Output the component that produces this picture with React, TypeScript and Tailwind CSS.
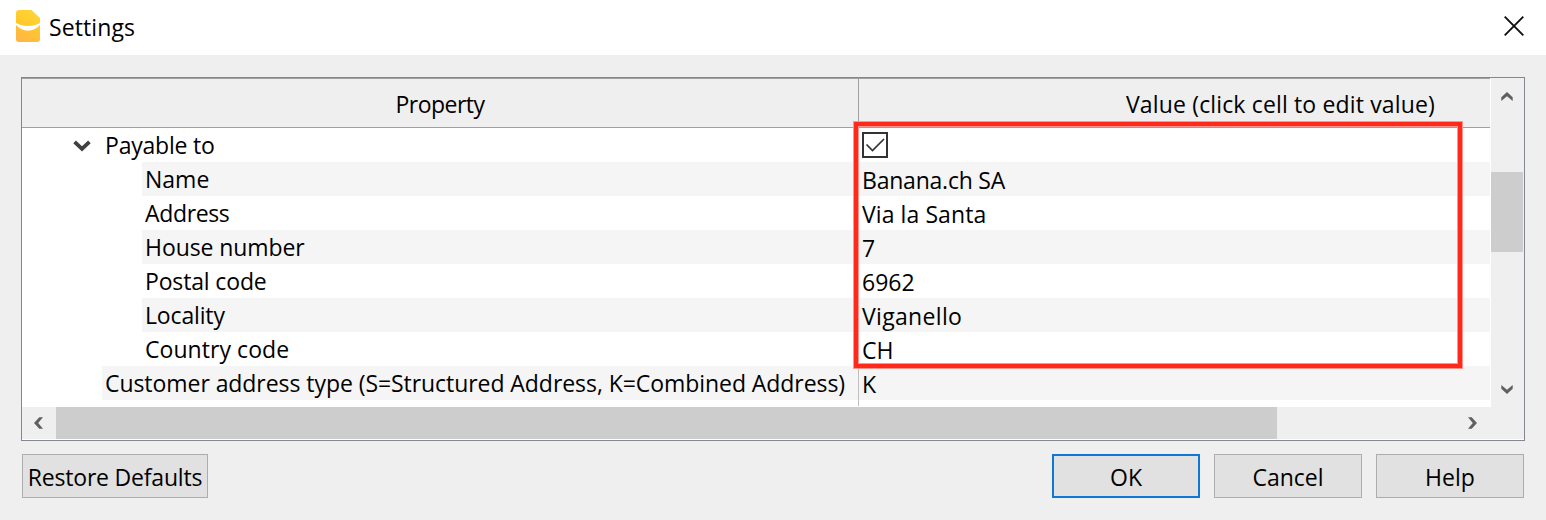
import { ReactNode } from "react";

type Item = {
  label: string;
  value?: string;
  level: 1 | 2;
  striped?: boolean;
  labelClass: string;
  valueClass?: string;
};

const items: Item[] = [
  { label: "Payable to", level: 1, labelClass: "tracking-[-0.2px]" },
  {
    label: "Name",
    value: "Banana.ch SA",
    level: 2,
    striped: true,
    labelClass: "",
    valueClass: "tracking-[-0.22px]",
  },
  {
    label: "Address",
    value: "Via la Santa",
    level: 2,
    labelClass: "tracking-[-0.35px]",
    valueClass: "tracking-[0.08px]",
  },
  { label: "House number", value: "7", level: 2, striped: true, labelClass: "tracking-[-0.08px]" },
  { label: "Postal code", value: "6962", level: 2, labelClass: "tracking-[-0.15px]" },
  {
    label: "Locality",
    value: "Viganello",
    level: 2,
    striped: true,
    labelClass: "tracking-[-0.15px]",
    valueClass: "tracking-[0.33px]",
  },
  { label: "Country code", value: "CH", level: 2, labelClass: "tracking-[0.06px]" },
  {
    label: "Customer address type (S=Structured Address, K=Combined Address)",
    value: "K",
    level: 1,
    striped: true,
    labelClass: "tracking-[-0.06px]",
  },
];

function AppIcon() {
  return (
    <svg width="24" height="32" viewBox="0 0 24 32" className="-mt-[3px] shrink-0">
      <defs>
        <linearGradient id="top" x1="0" y1="1" x2="1" y2="0">
          <stop offset="0" stopColor="#ffc524" />
          <stop offset="1" stopColor="#ffd83c" />
        </linearGradient>
        <linearGradient id="bottom" x1="0" y1="1" x2="1" y2="0">
          <stop offset="0" stopColor="#ffb347" />
          <stop offset="1" stopColor="#ffcb2b" />
        </linearGradient>
      </defs>
      <path d="M3 0H15.5L24 8V13C17 17 7 17 0 13V3Q0 0 3 0Z" fill="url(#top)" />
      <path d="M0 15C7 22.500 17 22.500 24 15V29Q24 32 21 32H3Q0 32 0 29Z" fill="url(#bottom)" />
    </svg>
  );
}

function ScrollArrow({ className }: { className: string }) {
  return (
    <svg width="12" height="10" viewBox="0 0 12 10" className={className}>
      <path d="M0.300 9V5.300L6 0L11.700 5.300V9L6 4.200Z" fill="#606060" />
    </svg>
  );
}

function Button({ children, className }: { children: ReactNode; className: string }) {
  return (
    <button
      className={`flex h-11 items-center justify-center whitespace-nowrap bg-[#e1e1e1] pt-[2px] ${className}`}
    >
      {children}
    </button>
  );
}

function Row({ item }: { item: Item }) {
  const stripe = item.striped ? "bg-[#f5f5f5]" : "";
  return (
    <div className="flex h-[34px] shrink-0 whitespace-nowrap leading-[34px]">
      <div className={`flex w-[836px] ${item.level === 1 ? "pl-20" : "pl-[120px]"}`}>
        <div className={`relative flex-1 pl-[3px] ${stripe}`}>
          {item.value === undefined && (
            <svg width="18" height="12" viewBox="0 0 18 12" className="absolute -left-[29px] top-[12px]">
              <path d="M1.600 1.800L9 8.800L16.400 1.800" fill="none" stroke="#404040" strokeWidth="3.800" />
            </svg>
          )}
          <span className={item.labelClass}>{item.label}</span>
        </div>
      </div>
      <div className="w-px bg-[#c0c0c0]" />
      <div className={`flex-1 pl-[3px] ${stripe}`}>
        {item.value === undefined ? (
          <svg width="26" height="26" viewBox="0 0 26 26" className="mt-1">
            <rect x="1" y="1" width="24" height="24" fill="#fff" stroke="#333" strokeWidth="2" />
            <path d="M4.500 12.500L10.500 18.500L22 7" fill="none" stroke="#333" strokeWidth="1.700" />
          </svg>
        ) : (
          <span className={`relative top-px ${item.valueClass ?? ""}`}>{item.value}</span>
        )}
      </div>
    </div>
  );
}

export default function App() {
  return (
    <div className="flex h-[520px] w-[1546px] flex-col overflow-hidden bg-[#efefef] font-['Open_Sans','Noto_Sans',sans-serif] text-[23px] text-black">
      <header className="flex h-[55px] shrink-0 items-center justify-between bg-white pl-4 pr-[22px]">
        <div className="flex items-center gap-[9px]">
          <AppIcon />
          <h1 className="-mt-px leading-[34px] tracking-[0.1px]">Settings</h1>
        </div>
        <svg width="20" height="20" viewBox="0 0 20 20" className="-mt-[3px]">
          <path d="M0.700 0.700L19.300 19.300M19.300 0.700L0.700 19.300" stroke="#111" strokeWidth="1.900" />
        </svg>
      </header>

      <main className="relative ml-[21px] mt-[22px] flex h-[364px] w-[1504px] shrink-0 flex-col border border-[#828790] bg-white">
        <div className="flex h-[329px]">
          <div className="flex w-[1468px] flex-col overflow-hidden">
            <div className="flex h-[50px] shrink-0 whitespace-nowrap border-y border-[#a0a0a0] bg-[#efefef] leading-[50px]">
              <div className="w-[836px] text-center tracking-[-0.5px]">Property</div>
              <div className="w-px bg-[#a0a0a0]" />
              <div className="flex-1 pl-[267px] tracking-[0.15px]">Value (click cell to edit value)</div>
            </div>
            {items.map((item) => (
              <Row key={item.label} item={item} />
            ))}
            <div className="flex h-[6px] pl-[836px]">
              <div className="w-px bg-[#c0c0c0]" />
            </div>
          </div>
          <div className="ml-px flex w-8 flex-col items-center bg-[#efefef]">
            <ScrollArrow className="mt-[14px]" />
            <div className="mt-[70px] h-20 w-full bg-[#cdcdcd]" />
            <ScrollArrow className="mt-[132px] rotate-180" />
          </div>
          <div className="w-px bg-[#efefef]" />
        </div>
        <div className="flex h-8 items-center bg-[#efefef]">
          <div className="flex w-[34px] justify-center">
            <ScrollArrow className="-rotate-90" />
          </div>
          <div className="h-8 w-[1221px] bg-[#cdcdcd]" />
          <ScrollArrow className="ml-[189px] rotate-90" />
        </div>
        <div className="pointer-events-none absolute left-[832px] top-[44px] h-[246px] w-[608px] border-4 border-[#ff2a1c] shadow-[0_0_0_1px_#ff958d,inset_0_0_0_1px_#ff958d]" />
      </main>

      <footer className="flex pl-[22px] pr-[22px] pt-[13px]">
        <Button className="w-[186px] border border-[#adadad] tracking-[-0.2px]">Restore Defaults</Button>
        <div className="ml-auto flex gap-[14px]">
          <Button className="w-[148px] border-2 border-[#0f78d7]">OK</Button>
          <Button className="w-[148px] border border-[#adadad]">Cancel</Button>
          <Button className="w-[148px] border border-[#adadad]">Help</Button>
        </div>
      </footer>
    </div>
  );
}
